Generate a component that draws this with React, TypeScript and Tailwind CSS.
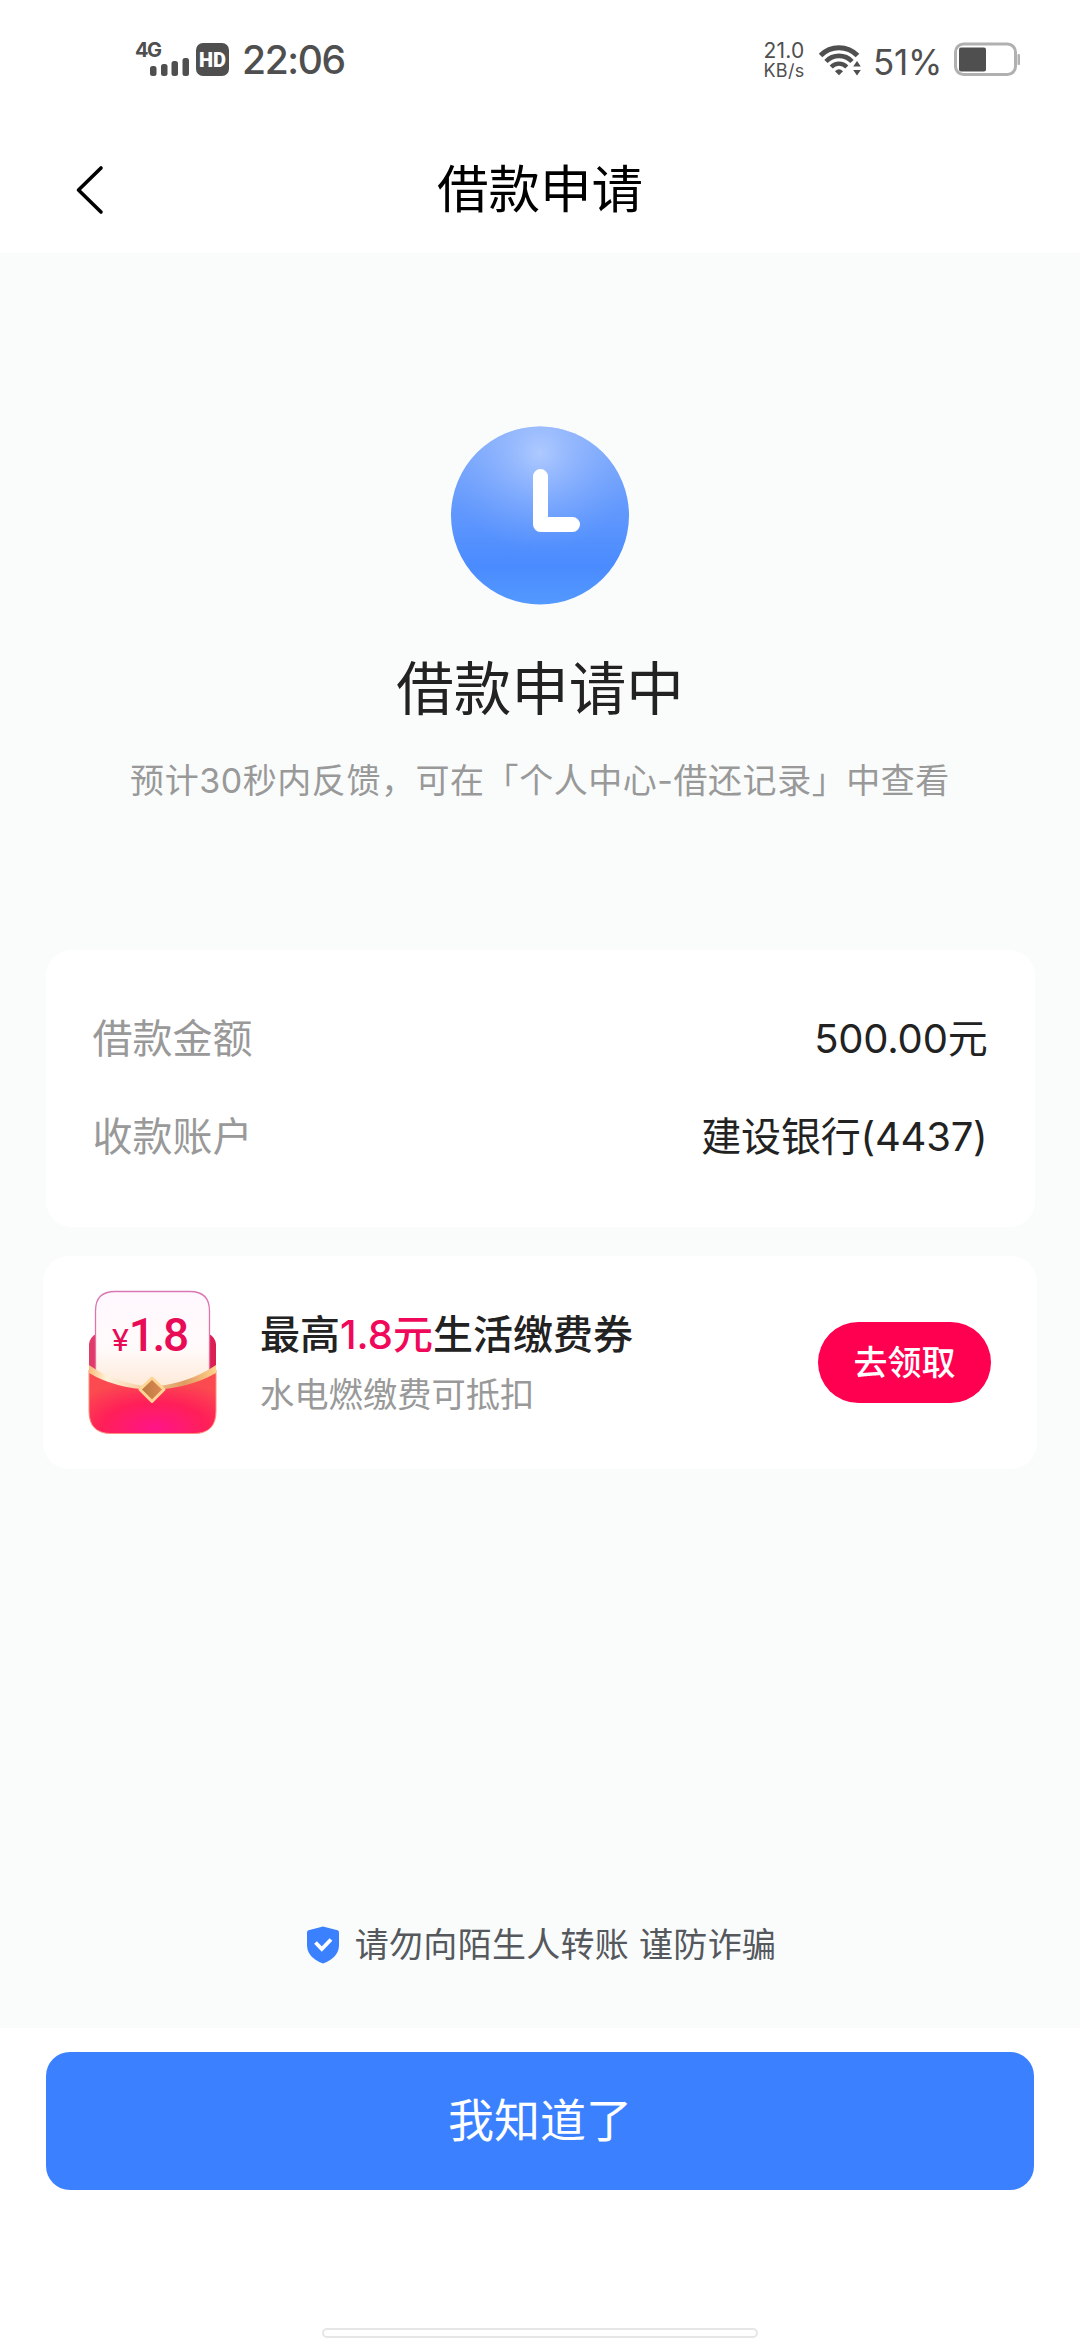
import React from 'react';

interface DetailRow {
  label: string;
  value: string;
}

const details: DetailRow[] = [
  { label: '借款金额', value: '500.00元' },
  { label: '收款账户', value: '建设银行(4437)' },
];

const WifiIcon: React.FC = () => (
  <svg width="42" height="32" viewBox="0 0 42 32" fill="none" stroke="#4f4f4f">
    <path d="M1.5 11.5 C11.5 1 28.5 1 38.5 11.5" strokeWidth="5" />
    <path d="M7 17.5 C14 10 26 10 33 17.5" strokeWidth="4.6" />
    <path d="M12.2 23 C16.5 18.4 23.5 18.4 27.8 23" strokeWidth="4.2" />
    <path d="M16 27.3 Q20 23.4 24 27.3 L20 31.2 Z" fill="#4f4f4f" stroke="none" />
    <path d="M34.2 22.5 L38 17 L41.8 22.5 Z M34.2 26 L38 31.5 L41.8 26 Z" fill="#4f4f4f" stroke="none" />
  </svg>
);

const StatusBar: React.FC = () => (
  <div className="flex h-[120px] justify-between pl-[135px] pr-[60px] pt-[40px] text-[#4f4f4f]">
    <div className="flex">
      <div className="relative h-[38px] w-[56px]">
        <span className="block text-[20px] font-bold leading-[20px] tracking-[-1.5px]">4G</span>
        <svg className="absolute bottom-[1px] left-[14px]" width="42" height="20" viewBox="0 0 42 20" fill="#4f4f4f">
          <rect x="1" y="9" width="6.5" height="10" rx="2.5" />
          <rect x="12" y="7" width="6.5" height="12" rx="2.5" />
          <rect x="22.5" y="4" width="6.5" height="15" rx="2.5" />
          <rect x="33.5" y="1" width="6.5" height="18" rx="2.5" />
        </svg>
      </div>
      <div className="ml-[5px] mt-[3px] flex h-[33px] w-[33px] items-center justify-center rounded-[7px] bg-[#4f4f4f] font-['Roboto',sans-serif] text-[20px] font-black leading-none text-white">
        HD
      </div>
      <span className="ml-[13px] text-[39px] font-medium leading-[40px] tracking-[-1.4px]">22:06</span>
    </div>
    <div className="flex">
      <div className="w-[46px] text-center">
        <div className="text-[21px] leading-[22px] tracking-[0.2px]">21.0</div>
        <div className="pt-px text-[18px] leading-[16px] tracking-[0.3px]">KB/s</div>
      </div>
      <div className="ml-[12px] mt-[4px]">
        <WifiIcon />
      </div>
      <span className="ml-[12px] w-[69px] whitespace-nowrap text-[35px] leading-[44px] tracking-[-0.2px]">51%</span>
      <svg className="ml-[12px] mt-[2px]" width="66" height="34" viewBox="0 0 66 34">
        <rect x="1.5" y="2" width="60" height="30.5" rx="8" fill="none" stroke="#b0b0b0" strokeWidth="3" />
        <rect x="5" y="5.5" width="27" height="24" rx="2" fill="#4f4f4f" />
        <rect x="63.5" y="12" width="2.5" height="11" rx="1" fill="#b0b0b0" />
      </svg>
    </div>
  </div>
);

const ClockIcon: React.FC = () => (
  <svg width="180" height="180" viewBox="0 0 180 180">
    <defs>
      <linearGradient id="clockBase" x1="0" y1="0" x2="0" y2="1">
        <stop offset="0" stopColor="#86aefb" />
        <stop offset="0.45" stopColor="#6399fd" />
        <stop offset="0.78" stopColor="#4a8bff" />
        <stop offset="1" stopColor="#5399ff" />
      </linearGradient>
      <radialGradient id="clockGlow" cx="0.5" cy="0.15" r="0.55">
        <stop offset="0" stopColor="#b4cdff" stopOpacity="0.9" />
        <stop offset="1" stopColor="#7faaff" stopOpacity="0" />
      </radialGradient>
    </defs>
    <circle cx="90" cy="90.5" r="89" fill="url(#clockBase)" />
    <circle cx="90" cy="90.5" r="89" fill="url(#clockGlow)" />
    <path d="M90.5 51.5 V99.5 H122.5" fill="none" stroke="#fff" strokeWidth="15" strokeLinecap="round" strokeLinejoin="round" />
  </svg>
);

const EnvelopeIcon: React.FC = () => (
  <svg width="129" height="145" viewBox="0 0 129 145">
    <defs>
      <linearGradient id="paper" x1="0" y1="0" x2="0" y2="1">
        <stop offset="0" stopColor="#fff8ff" />
        <stop offset="0.55" stopColor="#fffafa" />
        <stop offset="1" stopColor="#fde6d0" />
      </linearGradient>
      <linearGradient id="paperEdge" x1="0" y1="0" x2="0" y2="1">
        <stop offset="0" stopColor="#d878b4" />
        <stop offset="1" stopColor="#f06a94" />
      </linearGradient>
      <radialGradient id="pocket" cx="0.52" cy="0.92" r="0.75">
        <stop offset="0" stopColor="#ff1588" />
        <stop offset="0.55" stopColor="#ff1f58" />
        <stop offset="1" stopColor="#fb4a50" />
      </radialGradient>
      <linearGradient id="ribbon" x1="0" y1="0" x2="1" y2="0">
        <stop offset="0" stopColor="#f9bd78" />
        <stop offset="0.14" stopColor="#fff3dc" />
        <stop offset="0.45" stopColor="#f3c99a" />
        <stop offset="0.75" stopColor="#e09a60" />
        <stop offset="1" stopColor="#ffd28a" />
      </linearGradient>
      <linearGradient id="gem" x1="0" y1="0" x2="1" y2="0">
        <stop offset="0" stopColor="#b8793f" />
        <stop offset="1" stopColor="#e08a55" />
      </linearGradient>
    </defs>
    <path d="M1 54 Q2 47 8 44 V85 H1 Z" fill="#e23a68" />
    <path d="M128 54 Q127 47 121 44 V85 H128 Z" fill="#dc1f52" />
    <path d="M7.5 92 V21 Q7.5 1.5 27 1.5 H102 Q121.5 1.5 121.5 21 V92 L64 106 Z" fill="url(#paper)" stroke="url(#paperEdge)" strokeWidth="1.3" />
    <path d="M1 80 Q26 96 64 99 Q102 96 128 80 V121 Q128 143.5 106 143.5 H23 Q1 143.5 1 121 Z" fill="url(#pocket)" stroke="#ff8d7c" strokeWidth="1" />
    <path d="M1 75 Q26 93 64 97 Q102 93 128 75 V83 Q102 98 64 100 Q26 98 1 83 Z" fill="url(#ribbon)" />
    <path d="M64 88 L76 99.5 L64 111.5 L52 99.5 Z" fill="url(#gem)" stroke="#ffd596" strokeWidth="3" strokeLinejoin="round" />
  </svg>
);

const ShieldIcon: React.FC = () => (
  <svg width="34" height="38" viewBox="0 0 34 38">
    <path d="M17 0.5 L31.5 4.3 Q33 4.8 33 6.5 V19 Q33 31.5 17 37.5 Q1 31.5 1 19 V6.5 Q1 4.8 2.5 4.3 Z" fill="#3b81ff" />
    <path d="M9.5 16.5 L15.8 23 L25 13.5" fill="none" stroke="#fff" strokeWidth="3.8" />
  </svg>
);

const App: React.FC = () => {
  return (
    <div className="flex h-[2340px] w-[1080px] flex-col overflow-hidden bg-white font-['Inter','Noto_Sans_CJK_SC',sans-serif]">
      <StatusBar />

      {/* Header */}
      <header className="grid h-[133px] grid-cols-[1fr_auto_1fr] items-center px-[75px]">
        <svg width="30" height="50" viewBox="0 0 30 50" className="mt-[6px]" fill="none" stroke="#000" strokeWidth="3.6" strokeLinecap="round" strokeLinejoin="round">
          <path d="M26 3 L3.5 25 L26 47" />
        </svg>
        <h1 className="mt-[5px] text-[51.5px] leading-[60px] text-black">借款申请</h1>
      </header>

      <main className="flex h-[1775px] flex-col items-center bg-[#fafcfc] pt-[172px]">
        <ClockIcon />
        <h2 className="mt-[46px] text-[57.5px] leading-[76px] text-[#222]">借款申请中</h2>
        <p className="mt-[34px] whitespace-nowrap text-[34px] leading-[40px] tracking-[0.55px] text-[#999]">
          预计30秒内反馈，可在「个人中心-借还记录」中查看
        </p>

        {/* Loan details */}
        <section className="mt-[149px] flex h-[277px] w-[989px] flex-col gap-[38px] rounded-[26px] bg-white px-[47px] pt-[59px]">
          {details.map((row) => (
            <div key={row.label} className="flex justify-between text-[40px] leading-[60px]">
              <span className="text-[#999]">{row.label}</span>
              <span className="tracking-[-0.2px] text-[#222]">{row.value}</span>
            </div>
          ))}
        </section>

        {/* Coupon */}
        <section className="mt-[29px] flex h-[213px] w-[994px] items-center rounded-[26px] bg-white pl-[45px] pr-[46px]">
          <div className="relative">
            <EnvelopeIcon />
            <div className="absolute left-[24px] top-[23px] flex items-baseline font-['Roboto',sans-serif] leading-[44px] text-[#e80b55]">
              <span className="text-[32px]">¥</span>
              <span className="text-[46px] font-medium tracking-[-2.4px]">1.8</span>
            </div>
          </div>
          <div className="ml-[43px] flex flex-col pt-[4px]">
            <span className="text-[40px] font-medium leading-[60px] text-[#222]">
              最高<span className="text-[#f0085a]">1.8元</span>生活缴费券
            </span>
            <span className="text-[34.3px] leading-[60px] text-[#999]">水电燃缴费可抵扣</span>
          </div>
          <button className="ml-auto h-[81px] w-[173px] rounded-full bg-[#ff0051] text-[34px] font-medium text-white">
            去领取
          </button>
        </section>

        <div className="mt-[456px] flex items-center gap-[15px] pl-[2px]">
          <ShieldIcon />
          <span className="text-[34px] leading-[40px] tracking-[0.3px] text-[#55585c]">请勿向陌生人转账 谨防诈骗</span>
        </div>
      </main>

      <footer className="flex flex-1 flex-col items-center pt-[24px]">
        <button className="h-[138px] w-[988px] rounded-[24px] bg-[#3b81ff] pb-[2px] text-[46px] text-white">我知道了</button>
        <div className="mt-auto mb-[2px] h-[10px] w-[436px] rounded-full border-2 border-[#e6e6e6] bg-white" />
      </footer>
    </div>
  );
};

export default App;
